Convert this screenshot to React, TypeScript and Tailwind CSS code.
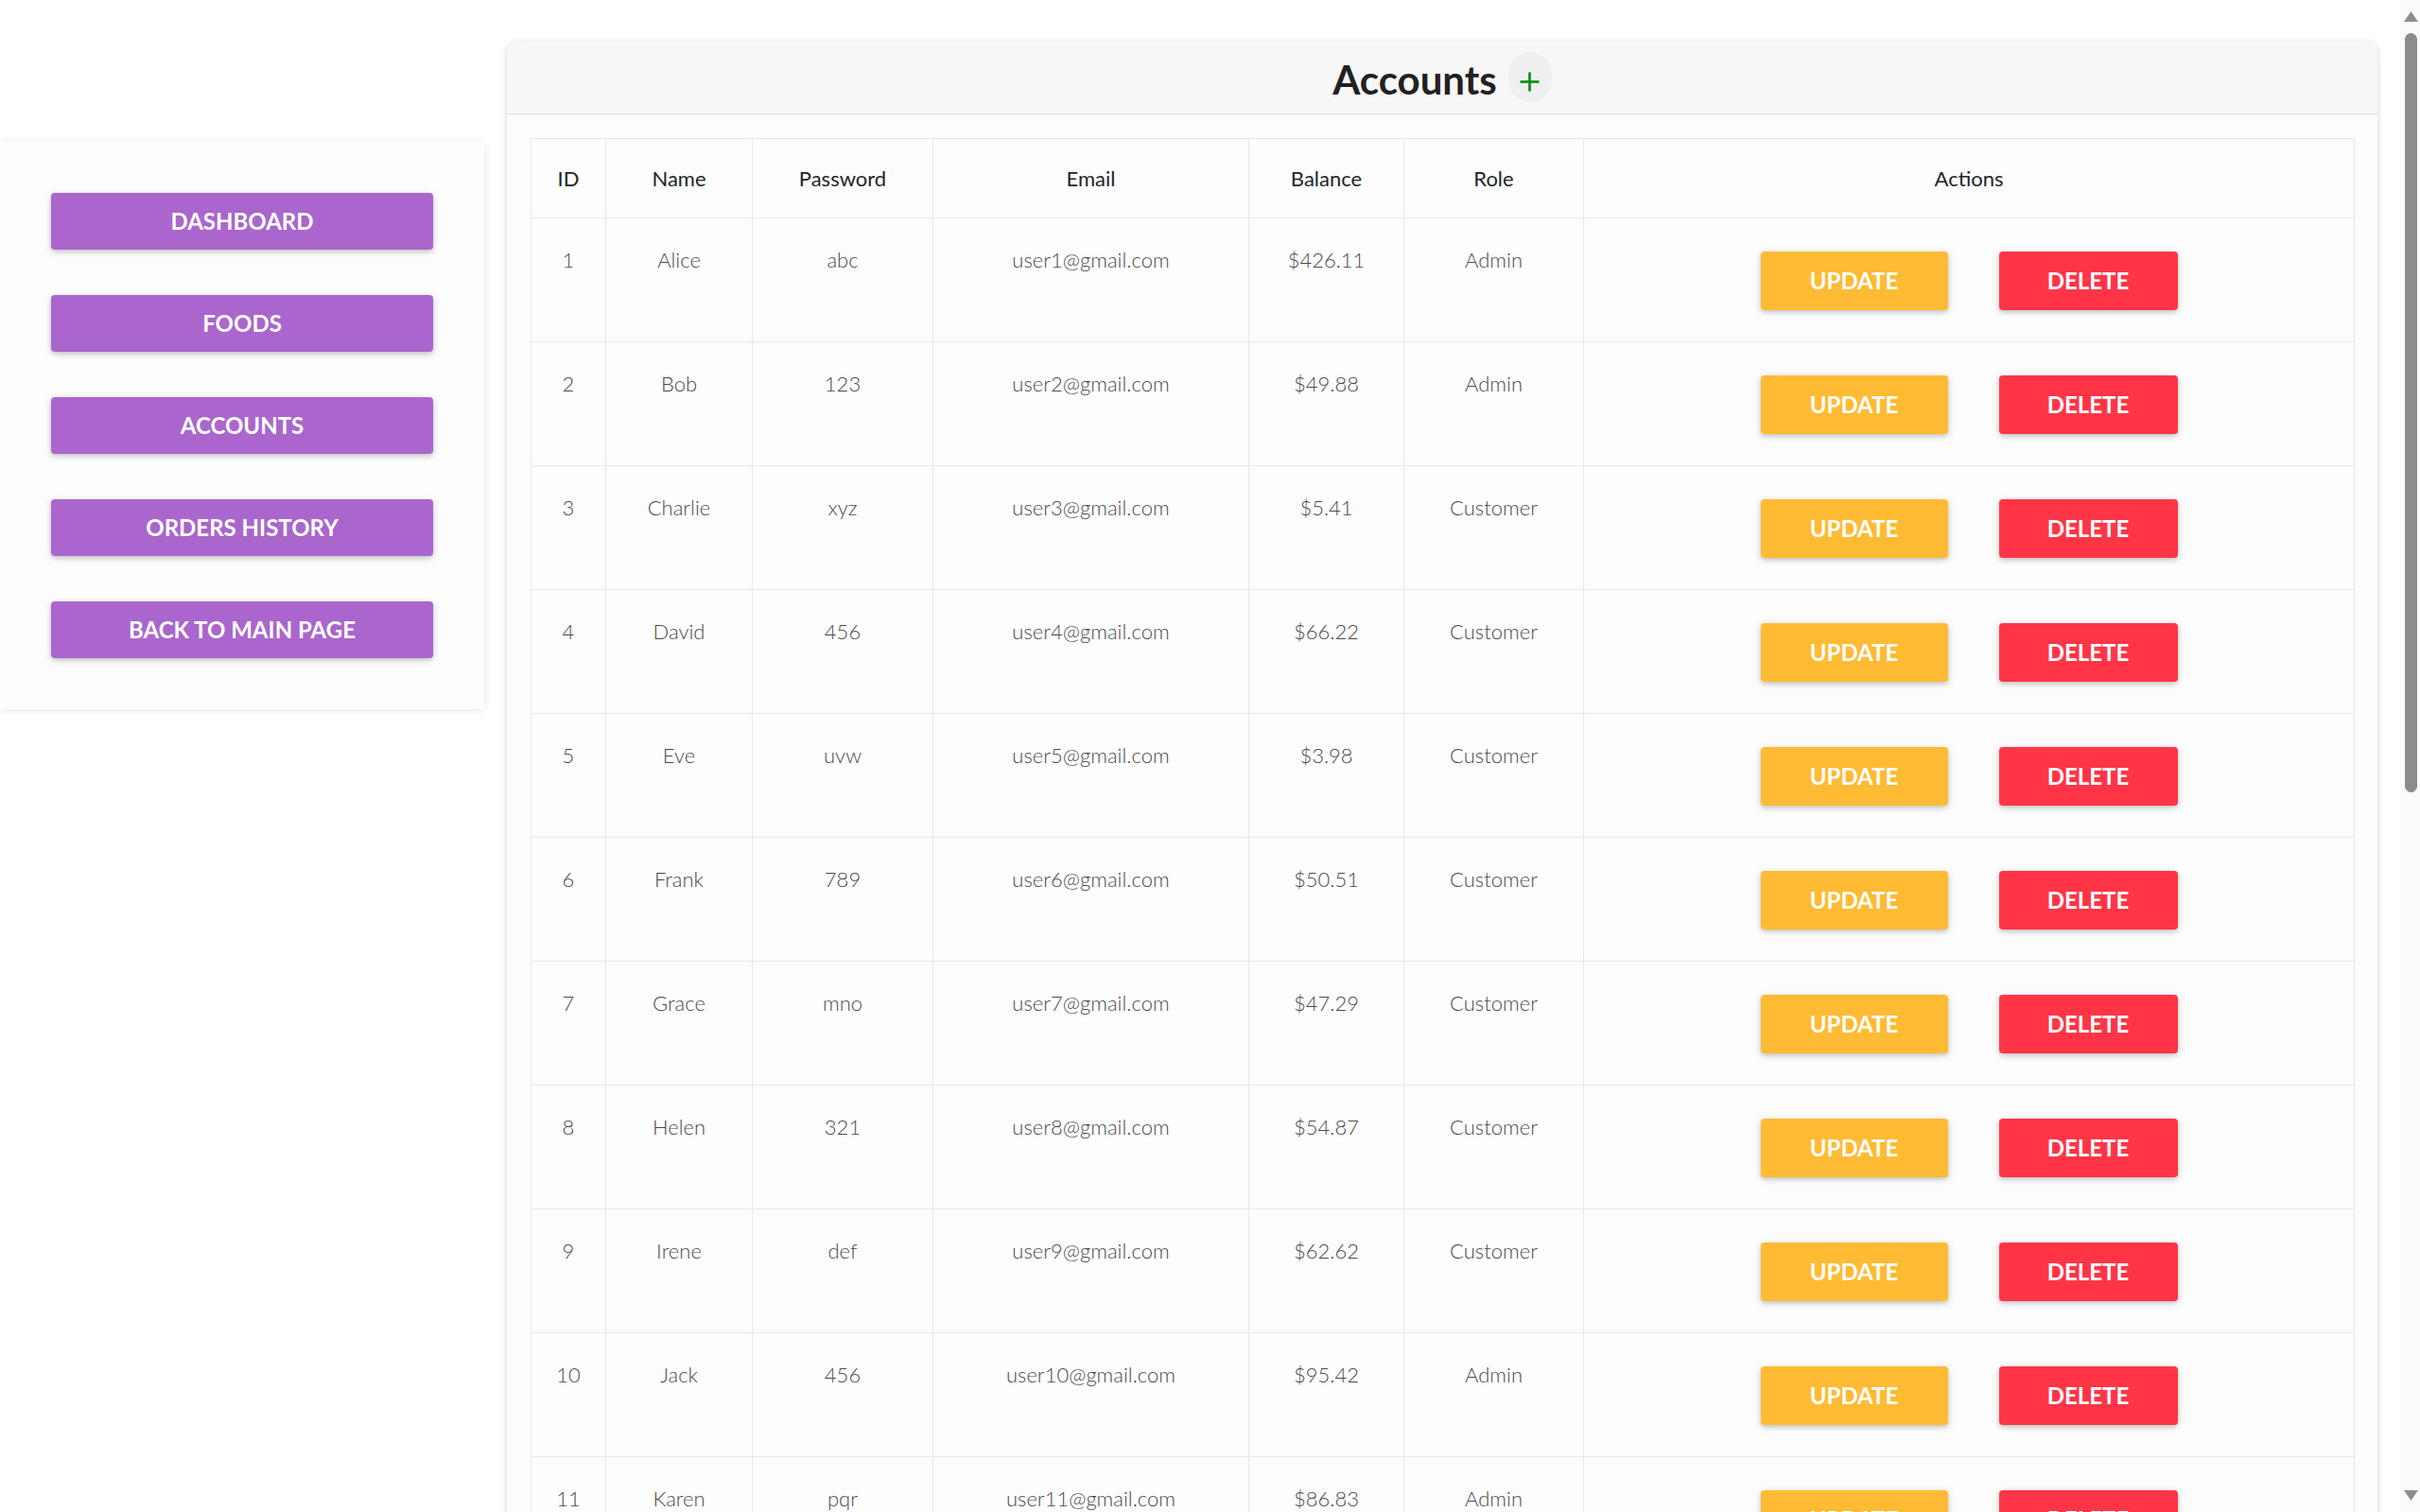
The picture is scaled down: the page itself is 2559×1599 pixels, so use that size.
import React from "react";

type Row = {
  id: number;
  name: string;
  password: string;
  email: string;
  balance: string;
  role: string;
};

const rows: Row[] = [
  { id: 1, name: "Alice", password: "abc", email: "user1@gmail.com", balance: "$426.11", role: "Admin" },
  { id: 2, name: "Bob", password: "123", email: "user2@gmail.com", balance: "$49.88", role: "Admin" },
  { id: 3, name: "Charlie", password: "xyz", email: "user3@gmail.com", balance: "$5.41", role: "Customer" },
  { id: 4, name: "David", password: "456", email: "user4@gmail.com", balance: "$66.22", role: "Customer" },
  { id: 5, name: "Eve", password: "uvw", email: "user5@gmail.com", balance: "$3.98", role: "Customer" },
  { id: 6, name: "Frank", password: "789", email: "user6@gmail.com", balance: "$50.51", role: "Customer" },
  { id: 7, name: "Grace", password: "mno", email: "user7@gmail.com", balance: "$47.29", role: "Customer" },
  { id: 8, name: "Helen", password: "321", email: "user8@gmail.com", balance: "$54.87", role: "Customer" },
  { id: 9, name: "Irene", password: "def", email: "user9@gmail.com", balance: "$62.62", role: "Customer" },
  { id: 10, name: "Jack", password: "456", email: "user10@gmail.com", balance: "$95.42", role: "Admin" },
  { id: 11, name: "Karen", password: "pqr", email: "user11@gmail.com", balance: "$86.83", role: "Admin" },
  { id: 12, name: "Leo", password: "stu", email: "user12@gmail.com", balance: "$12.30", role: "Customer" },
];

const navItems = ["Dashboard", "Foods", "Accounts", "Orders History", "Back to main page"];

const btnShadow = "shadow-[0_2px_5px_0_rgba(0,0,0,0.16),0_2px_10px_0_rgba(0,0,0,0.12)]";

function Sidebar() {
  return (
    <aside className="mt-[150px] w-[512px] shrink-0 bg-[#fdfdfd] p-[54px] shadow-[0_1px_8px_0_rgba(0,0,0,0.10)]">
      <nav className="flex flex-col gap-[48px]">
        {navItems.map((item) => (
          <button
            key={item}
            className={`h-[60px] w-full rounded-[4px] bg-[#aa66cc] text-[24px] font-bold uppercase leading-none text-white ${btnShadow}`}
          >
            {item}
          </button>
        ))}
      </nav>
    </aside>
  );
}

function PlusButton() {
  return (
    <button className="flex h-[53px] w-[46px] items-start justify-center rounded-full bg-[#efefef] pt-[21px]">
      <svg width="21" height="21" viewBox="0 0 21 21">
        <line x1="10.5" y1="0.5" x2="10.5" y2="20.5" stroke="#0a8a0a" strokeWidth="2.6" />
        <line x1="0.5" y1="10.5" x2="20.5" y2="10.5" stroke="#0a8a0a" strokeWidth="2.6" />
      </svg>
    </button>
  );
}

function ScrollBar() {
  return (
    <div className="flex h-full w-[21px] shrink-0 flex-col items-center bg-[#fbfbfb] pl-[4px] pr-[2px]">
      <svg width="15" height="11" viewBox="0 0 15 11" className="mt-[12px]">
        <polygon points="7.5,0 15,11 0,11" fill="#8c8c8c" />
      </svg>
      <div className="mt-[12px] h-[803px] w-[13px] rounded-full bg-[#8c8c8c]" />
      <div className="flex-1" />
      <svg width="15" height="11" viewBox="0 0 15 11" className="mb-[12px]">
        <polygon points="0,0 15,0 7.5,11" fill="#8c8c8c" />
      </svg>
    </div>
  );
}

export default function App() {
  const th = "border border-[#e8e8e8] pt-[25px] pb-[25px] text-center align-middle text-[22px] font-normal leading-[33px] text-[#212529]";
  const td = "border border-[#e8e8e8] pt-[27px] text-center align-top text-[22px] font-light leading-[33px] text-[#4a4a4a]";
  return (
    <div
      className="flex h-screen w-full overflow-hidden bg-white"
      style={{ fontFamily: "Lato, 'Noto Sans', sans-serif" }}
    >
      <div className="flex min-w-0 flex-1 items-start">
        <Sidebar />
        <main className="ml-[24px] mt-[43px] w-[1978px] shrink-0 rounded-[10px] bg-[#fdfdfd] shadow-[0_2px_5px_0_rgba(0,0,0,0.12),0_2px_10px_0_rgba(0,0,0,0.08)]">
          <header className="flex h-[78px] items-center justify-center gap-[12px] rounded-t-[10px] border-b border-[#dcdcdc] bg-[#f7f7f7]">
            <h1 className="pt-[4px] text-[42px] font-bold leading-none text-[#212121]">Accounts</h1>
            <PlusButton />
          </header>
          <div className="pb-[25px] pl-[25px] pr-[24px] pt-[25px]">
            <table className="w-full table-fixed border-collapse">
              <colgroup>
                <col className="w-[79px]" />
                <col className="w-[155px]" />
                <col className="w-[191px]" />
                <col className="w-[334px]" />
                <col className="w-[164px]" />
                <col className="w-[190px]" />
                <col />
              </colgroup>
              <thead>
                <tr>
                  <th className={th}>ID</th>
                  <th className={th}>Name</th>
                  <th className={th}>Password</th>
                  <th className={th}>Email</th>
                  <th className={th}>Balance</th>
                  <th className={th}>Role</th>
                  <th className={th}>Actions</th>
                </tr>
              </thead>
              <tbody>
                {rows.map((r) => (
                  <tr key={r.id}>
                    <td className={td}>{r.id}</td>
                    <td className={td}>{r.name}</td>
                    <td className={td}>{r.password}</td>
                    <td className={td}>{r.email}</td>
                    <td className={td}>{r.balance}</td>
                    <td className={td}>{r.role}</td>
                    <td className="border border-[#e8e8e8] pb-[33px] pt-[35px] align-top">
                      <div className="flex items-center justify-center gap-[54px]">
                        <button
                          className={`h-[62px] w-[198px] rounded-[4px] bg-[#ffbb33] text-[24px] font-bold uppercase leading-none text-white ${btnShadow}`}
                        >
                          Update
                        </button>
                        <button
                          className={`h-[62px] w-[189px] rounded-[4px] bg-[#ff3547] text-[24px] font-bold uppercase leading-none text-white ${btnShadow}`}
                        >
                          Delete
                        </button>
                      </div>
                    </td>
                  </tr>
                ))}
              </tbody>
            </table>
          </div>
        </main>
      </div>
      <ScrollBar />
    </div>
  );
}
